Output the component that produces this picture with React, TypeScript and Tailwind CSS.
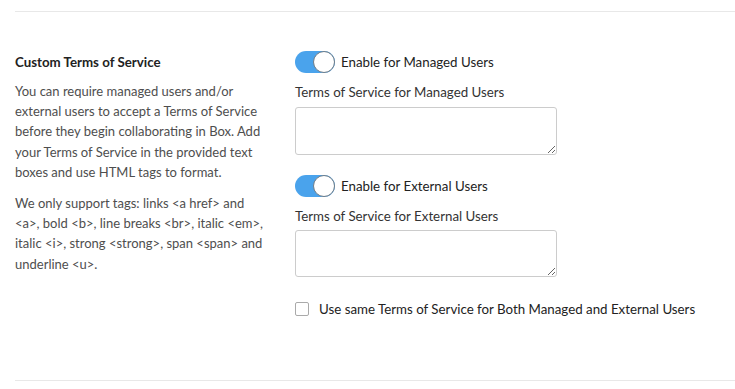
import React from "react";

function Toggle() {
  return (
    <div className="relative w-[40px] h-[22px] rounded-full bg-[#4aa3ec] shrink-0">
      <div className="absolute right-0 top-0 w-[22px] h-[22px] rounded-full bg-white border border-[#6f7c87]" />
    </div>
  );
}

export default function App() {
  return (
    <div
      className="w-[735px] h-[389px] bg-white px-[15px] text-[#4e4e4e]"
      style={{ fontFamily: "Lato, 'Open Sans', sans-serif" }}
    >
      <div className="pt-[11px]" />
      <div className="border-t border-[#e8e8e8] -mr-[15px]" />
      <div className="flex pt-[40px] h-[368px]">
        <div className="w-[265px] shrink-0">
          <div className="text-[13.3px] font-bold leading-[20px] text-[#222]">Custom Terms of Service</div>
          <p className="mt-[9px] w-[250px] text-[13px] leading-[20.2px]">
            You can require managed users and/or external users to accept a Terms of Service before they begin
            collaborating in Box. Add your Terms of Service in the provided text boxes and use HTML tags to format.
          </p>
          <p className="mt-[11px] w-[250px] text-[13px] leading-[20.2px]">
            We only support tags: links &lt;a href&gt; and &lt;a&gt;, bold &lt;b&gt;, line breaks &lt;br&gt;, italic
            &lt;em&gt;, italic &lt;i&gt;, strong &lt;strong&gt;, span &lt;span&gt; and underline &lt;u&gt;.
          </p>
        </div>
        <div className="ml-[15px] flex flex-col text-[13.3px] leading-[20px] text-[#333]">
          <div className="flex items-center gap-[6px] h-[20px]">
            <Toggle />
            <span className="text-[#222]">Enable for Managed Users</span>
          </div>
          <div className="mt-[10px]">Terms of Service for Managed Users</div>
          <textarea className="mt-[5px] w-[262px] h-[48px] border border-[#ccc] rounded-[3px] outline-none" />
          <div className="mt-[21px] flex items-center gap-[6px] h-[20px]">
            <Toggle />
            <span className="text-[#222]">Enable for External Users</span>
          </div>
          <div className="mt-[10px]">Terms of Service for External Users</div>
          <textarea className="mt-[4px] w-[262px] h-[47px] border border-[#ccc] rounded-[3px] outline-none" />
          <div className="mt-[22px] flex items-center h-[20px]">
            <div className="w-[14px] h-[14px] border border-[#aaa] rounded-[2px] bg-white" />
            <span className="ml-[10px] text-[#222]">Use same Terms of Service for Both Managed and External Users</span>
          </div>
        </div>
      </div>
      <div className="border-t border-[#e8e8e8] -mr-[15px]" />
    </div>
  );
}
